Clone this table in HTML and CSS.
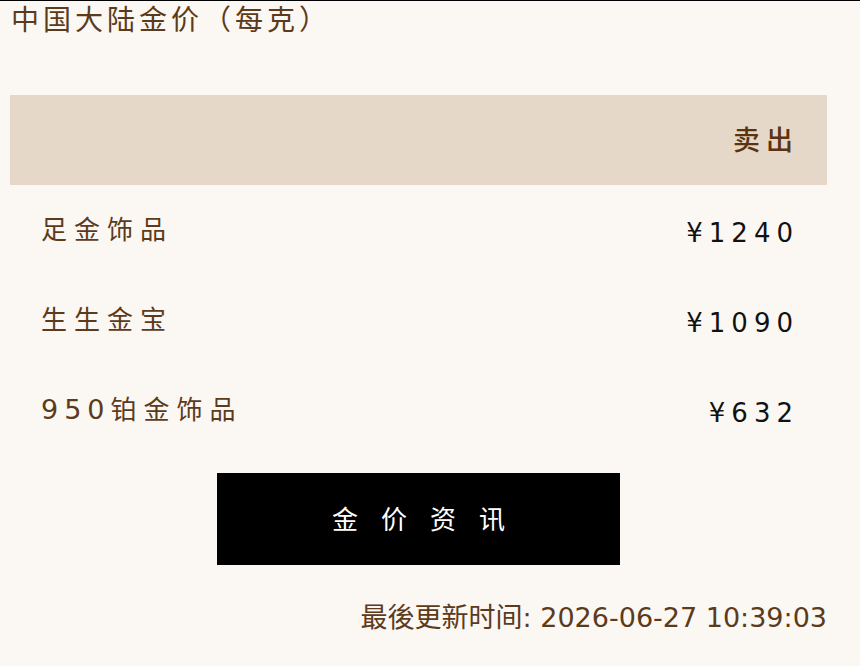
FILE: index.html
```html
<!DOCTYPE html>
<html lang="zh-CN">
<head>
<meta charset="utf-8">
<link rel="stylesheet" href="styles.css">
</head>
<body>
<h1 class="title">中国大陆金价（每克）</h1>
<div class="panel">
  <div class="price-table">
    <div class="head"><span class="head-cell">卖出</span></div>
    <div class="row"><span class="label">足金饰品</span><span class="price">¥1240</span></div>
    <div class="row"><span class="label">生生金宝</span><span class="price">¥1090</span></div>
    <div class="row"><span class="label"><span class="num">950</span>铂金饰品</span><span class="price">¥632</span></div>
  </div>
  <div class="actions"><a class="btn">金价资讯</a></div>
  <p class="updated">最後更新时间: 2026-06-27 10:39:03</p>
</div>
</body>
</html>
```
FILE: styles.css
```css
html, body {
  margin: 0;
  padding: 0;
}
body {
  background: #fbf7f3;
  border-top: 1px solid #000;
  font-family: "DejaVu Sans", "Noto Sans CJK SC", sans-serif;
  color: #5c3b1c;
  width: 860px;
  height: 665px;
  overflow: hidden;
}
.title {
  margin: 0;
  padding: 2px 0 0 11px;
  font-size: 28px;
  font-weight: normal;
  line-height: 36px;
  letter-spacing: 4px;
}
.panel {
  margin: 56px 0 0 10px;
  width: 817px;
}
.head {
  background: #e6d8c8;
  height: 90px;
  display: flex;
  align-items: center;
  justify-content: flex-end;
  padding-right: 28px;
  box-sizing: border-box;
}
.head-cell {
  font-size: 27px;
  font-weight: 500;
  color: #5a3310;
  letter-spacing: 6px;
  padding-bottom: 4px;
}
.row {
  height: 90px;
  display: flex;
  align-items: center;
  justify-content: space-between;
  padding: 0 28px 0 31px;
}
.label {
  font-size: 26px;
  letter-spacing: 7px;
  padding-bottom: 6px;
}
.num {
  font-size: 27px;
  letter-spacing: 6px;
}
.price {
  font-size: 26px;
  color: #111;
  letter-spacing: 6px;
  padding-top: 6px;
}
.actions {
  display: flex;
  justify-content: center;
  margin-top: 18px;
}
.btn {
  width: 403px;
  height: 92px;
  background: #000;
  color: #fff;
  display: flex;
  align-items: center;
  justify-content: center;
  font-size: 26px;
  letter-spacing: 23px;
  padding: 0 0 4px 23px;
  box-sizing: border-box;
}
.updated {
  margin: 36px 0 0;
  text-align: right;
  font-size: 27px;
  line-height: 34px;
}
```
